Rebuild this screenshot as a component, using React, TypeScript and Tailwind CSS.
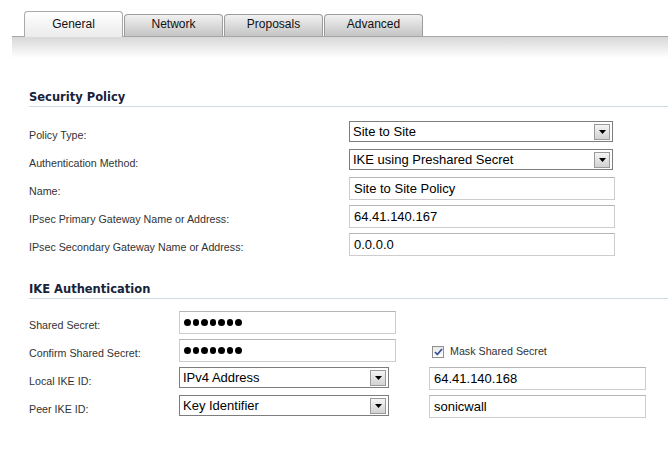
import React from "react";

const label = "font-['Liberation_Sans',Arial,sans-serif] text-[10.7px] leading-[13px] text-[#333]";
const field = "font-['Liberation_Sans',Arial,sans-serif] text-[13px] leading-[15px] text-black";

function Tab({ title, active }: { title: string; active?: boolean }) {
  if (active) {
    return (
      <div className="relative z-10 -mb-px flex h-[26px] w-[99px] items-center justify-center rounded-t-[4px] border border-b-0 border-[#a9a9a9] bg-gradient-to-b from-white to-[#ebebeb] pb-[2px] font-['Liberation_Sans',Arial,sans-serif] text-[12px] text-[#111]">
        {title}
      </div>
    );
  }
  return (
    <div className="flex h-[22px] w-[99px] items-center justify-center rounded-t-[4px] border border-b-0 border-[#9c9c9c] bg-gradient-to-b from-[#f1f1f1] to-[#c4c4c4] pb-[3px] font-['Liberation_Sans',Arial,sans-serif] text-[12px] text-[#111]">
      {title}
    </div>
  );
}

function Heading({ title }: { title: string }) {
  return (
    <div className="border-b border-[#cfdbe3] pb-[2px] font-['DejaVu_Sans',Verdana,sans-serif] text-[11.5px] font-bold leading-[13px] text-[#17223b]">
      {title}
    </div>
  );
}

function Select({ value, width }: { value: string; width: string }) {
  return (
    <div className={`flex h-[21px] ${width} items-center justify-between border border-[#7d7d7d] bg-white pl-[3px] pr-[2px]`}>
      <span className={field}>{value}</span>
      <span className="flex h-[16px] w-[16px] items-center justify-center border border-[#9a9a9a] bg-gradient-to-b from-[#f4f4f4] to-[#d2d2d2]">
        <svg width="7" height="4" viewBox="0 0 7 4">
          <path d="M0 0h7L3.5 4z" fill="#000" />
        </svg>
      </span>
    </div>
  );
}

function Input({ value, width }: { value: React.ReactNode; width: string }) {
  return (
    <div className={`flex h-[23px] ${width} items-center border border-[#cdcdcd] border-t-[#b5b5b5] bg-white pl-[4px]`}>
      <span className={field}>{value}</span>
    </div>
  );
}

function Dots() {
  return (
    <span className="flex gap-[2px]">
      {Array.from({ length: 7 }).map((_, i) => (
        <span key={i} className="block h-[6.5px] w-[6.5px] rounded-full bg-black" />
      ))}
    </span>
  );
}

function Row({ name, children, labelW = "w-[320px]" }: { name: string; children: React.ReactNode; labelW?: string }) {
  return (
    <div className="flex h-[28px] items-start">
      <div className={`${labelW} shrink-0 pt-[9px] ${label}`}>{name}</div>
      <div className="flex items-start pt-[1px]">{children}</div>
    </div>
  );
}

export default function App() {
  return (
    <div className="h-[454px] w-[668px] overflow-hidden bg-white">
      {/* tab strip */}
      <div className="pt-[11px]">
        <div className="flex items-end gap-px pl-[24px]">
          <Tab title="General" active />
          <Tab title="Network" />
          <Tab title="Proposals" />
          <Tab title="Advanced" />
        </div>
        <div className="ml-[12px] h-[22px] border-t border-[#a6a6a6] bg-gradient-to-b from-[#d8d8d8] to-white" />
      </div>

      <div className="pl-[29px] pt-[33px]">
        <Heading title="Security Policy" />
        <div className="pt-[13px]">
          <Row name="Policy Type:">
            <Select value="Site to Site" width="w-[264px]" />
          </Row>
          <Row name="Authentication Method:">
            <Select value="IKE using Preshared Secret" width="w-[264px]" />
          </Row>
          <Row name="Name:">
            <Input value="Site to Site Policy" width="w-[266px]" />
          </Row>
          <Row name="IPsec Primary Gateway Name or Address:">
            <Input value="64.41.140.167" width="w-[266px]" />
          </Row>
          <Row name="IPsec Secondary Gateway Name or Address:">
            <Input value="0.0.0.0" width="w-[266px]" />
          </Row>
        </div>

        <div className="pt-[23px]">
          <Heading title="IKE Authentication" />
        </div>
        <div className="pt-[11px]">
          <Row name="Shared Secret:" labelW="w-[150px]">
            <Input value={<Dots />} width="w-[217px]" />
          </Row>
          <Row name="Confirm Shared Secret:" labelW="w-[150px]">
            <Input value={<Dots />} width="w-[217px]" />
            <div className="ml-[36px] mt-[6px] flex items-center gap-[6px]">
              <span className="flex h-[12px] w-[12px] items-center justify-center border border-[#8f8f8f] bg-gradient-to-b from-[#e9e9e9] to-white">
                <svg width="9" height="8" viewBox="0 0 9 8">
                  <path d="M1 4l2.3 2.5L8 1" fill="none" stroke="#3a4fa0" strokeWidth="1.8" />
                </svg>
              </span>
              <span className={label}>Mask Shared Secret</span>
            </div>
          </Row>
          <Row name="Local IKE ID:" labelW="w-[150px]">
            <Select value="IPv4 Address" width="w-[210px]" />
            <div className="ml-[40px]">
              <Input value="64.41.140.168" width="w-[217px]" />
            </div>
          </Row>
          <Row name="Peer IKE ID:" labelW="w-[150px]">
            <Select value="Key Identifier" width="w-[210px]" />
            <div className="ml-[40px]">
              <Input value="sonicwall" width="w-[217px]" />
            </div>
          </Row>
        </div>
      </div>
    </div>
  );
}
